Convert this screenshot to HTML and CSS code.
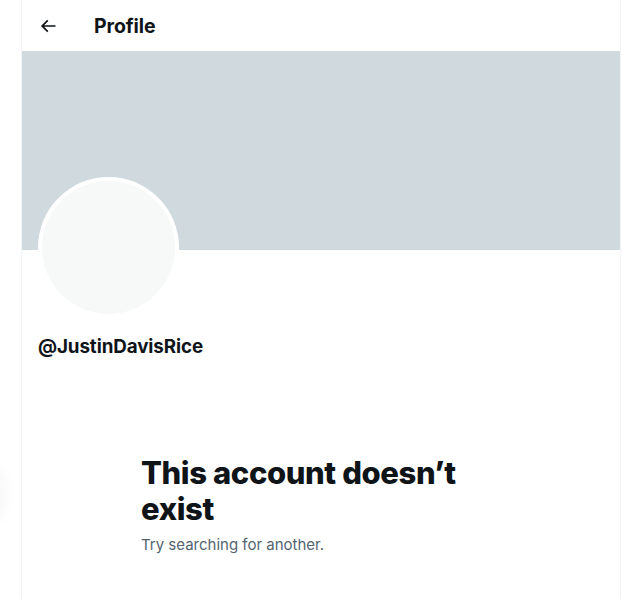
FILE: index.html
```html
<!DOCTYPE html>
<html lang="en">
<head>
<meta charset="utf-8">
<title>Profile</title>
<link rel="stylesheet" href="styles.css">
</head>
<body>
<div class="ghost"></div>
<main class="column">
  <header class="topbar">
    <div class="back">
      <svg viewBox="0 0 24 24" width="20" height="20" aria-hidden="true"><path d="M7.414 13l5.043 5.04-1.414 1.42L3.586 12l7.457-7.46 1.414 1.42L7.414 11H21v2H7.414z" fill="#0f1419"/></svg>
    </div>
    <h2 class="title">Profile</h2>
  </header>
  <div class="banner"></div>
  <section class="info">
    <div class="avatar"><div class="avatar-inner"></div></div>
    <div class="handle">@JustinDavisRice</div>
  </section>
  <section class="empty">
    <div class="empty-title">This account doesn’t exist</div>
    <div class="empty-sub">Try searching for another.</div>
  </section>
</main>
</body>
</html>
```
FILE: styles.css
```css
html, body {
  margin: 0;
  padding: 0;
  background: #ffffff;
  font-family: "Inter", "Roboto", "Liberation Sans", sans-serif;
  color: #0f1419;
}
.ghost {
  position: absolute;
  left: -30px;
  top: 465px;
  width: 38px;
  height: 60px;
  border-radius: 50%;
  background: #f9f9fa;
  filter: blur(4px);
}
.column {
  margin-left: 21px;
  width: 598px;
  min-height: 599px;
  border-left: 1px solid #eff3f4;
  border-right: 1px solid #eff3f4;
  position: relative;
  background: #fff;
}
.topbar {
  height: 51px;
  display: flex;
  align-items: center;
  padding-left: 16px;
}
.back {
  width: 56px;
  display: flex;
  align-items: center;
  height: 20px;
}
.back svg { display: block; }
.title {
  margin: 0;
  font-size: 19.5px;
  font-weight: 700;
  letter-spacing: -0.1px;
}
.banner {
  height: 199px;
  background: #cfd9de;
}
.info {
  padding-left: 16px;
}
.avatar {
  width: 141px;
  height: 141px;
  margin-top: -73px;
  border-radius: 50%;
  background: #fff;
  padding: 4px;
  box-sizing: border-box;
  position: relative;
}
.avatar-inner {
  width: 100%;
  height: 100%;
  border-radius: 50%;
  background: #f7f9f9;
}
.handle {
  margin-top: 17px;
  font-size: 18.8px;
  font-weight: 700;
  line-height: 24px;
  letter-spacing: -0.1px;
}
.empty {
  width: 340px;
  margin: 96px 0 0 119px;
}
.empty-title {
  font-size: 31px;
  font-weight: 800;
  line-height: 36px;
  letter-spacing: -0.4px;
}
.empty-sub {
  margin-top: 8px;
  font-size: 15px;
  line-height: 20px;
  color: #536471;
}
```
